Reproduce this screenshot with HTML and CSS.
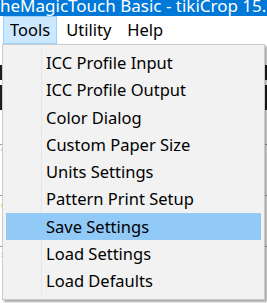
FILE: index.html
```html
<!DOCTYPE html>
<html lang="en">
<head>
    <meta charset="UTF-8">
    <meta name="viewport" content="width=device-width, initial-scale=1.0">
    <title>Tools menu</title>
    <link rel="stylesheet" href="styles.css">
</head>
<body>
    <div class="window">
        <div class="titlebar"><span class="title">heMagicTouch Basic - tikiCrop 15.</span></div>
        <div class="menubar">
            <div class="menubar-item open">Tools</div>
            <div class="menubar-item">Utility</div>
            <div class="menubar-item">Help</div>
        </div>
        <div class="content">
            <div class="toolstrip"></div>
            <div class="toolstrip short"></div>
            <div class="row">?</div>
            <div class="row">e</div>
            <div class="row">=</div>
            <div class="label">Si</div>
        </div>

        <ul class="dropdown">
            <li>ICC Profile Input</li>
            <li>ICC Profile Output</li>
            <li>Color Dialog</li>
            <li>Custom Paper Size</li>
            <li>Units Settings</li>
            <li>Pattern Print Setup</li>
            <li class="hover">Save Settings</li>
            <li>Load Settings</li>
            <li>Load Defaults</li>
        </ul>
    </div>
</body>
</html>
```

FILE: styles.css
```css
body {
    margin: 0;
    background: #fff;
    font-family: "Noto Sans", "Open Sans", sans-serif;
    color: #000;
    overflow: hidden;
}
.window {
    position: relative;
    width: 267px;
    height: 303px;
    overflow: hidden;
}
.titlebar {
    height: 16px;
    background: #0078d7;
    color: #fff;
    overflow: hidden;
    white-space: nowrap;
    font-size: 17px;
    line-height: 16px;
}
.title {
    display: block;
    margin-top: -2px;
}
.menubar {
    display: flex;
    height: 28px;
    padding-left: 3px;
    font-size: 16.5px;
    line-height: 26px;
}
.menubar-item {
    padding: 0 6px;
    margin-right: 2px;
    border: 1px solid transparent;
}
.menubar-item.open {
    background: #cce8ff;
    border-color: #99d1ff;
}
.content {
    display: flex;
    flex-direction: column;
    font-size: 13px;
}
.toolstrip {
    height: 15px;
    margin-top: 21px;
    background: #1e1e1e;
}
.toolstrip.short {
    height: 25px;
    margin-top: 5px;
}
.row {
    height: 16px;
    margin-top: 34px;
    border-top: 1px solid #a0a0a0;
    padding-left: 1px;
    line-height: 16px;
    color: #444;
}
.label {
    margin-top: 22px;
    padding-left: 10px;
}
.dropdown {
    position: absolute;
    top: 44px;
    left: 2px;
    width: 255px;
    margin: 0;
    padding: 4px 3px;
    list-style: none;
    background: #f2f2f2;
    border: 1px solid #cccccc;
    box-shadow: 2px 2px 2px rgba(0, 0, 0, 0.35);
    font-size: 16.5px;
}
.dropdown::before {
    content: "";
    position: absolute;
    top: 4px;
    bottom: 4px;
    left: 38px;
    border-left: 1px solid #e6e6e6;
}
.dropdown li {
    position: relative;
    height: 27.3px;
    line-height: 27.3px;
    padding-left: 40px;
}
.dropdown li.hover {
    background: #91c9f7;
}
```
